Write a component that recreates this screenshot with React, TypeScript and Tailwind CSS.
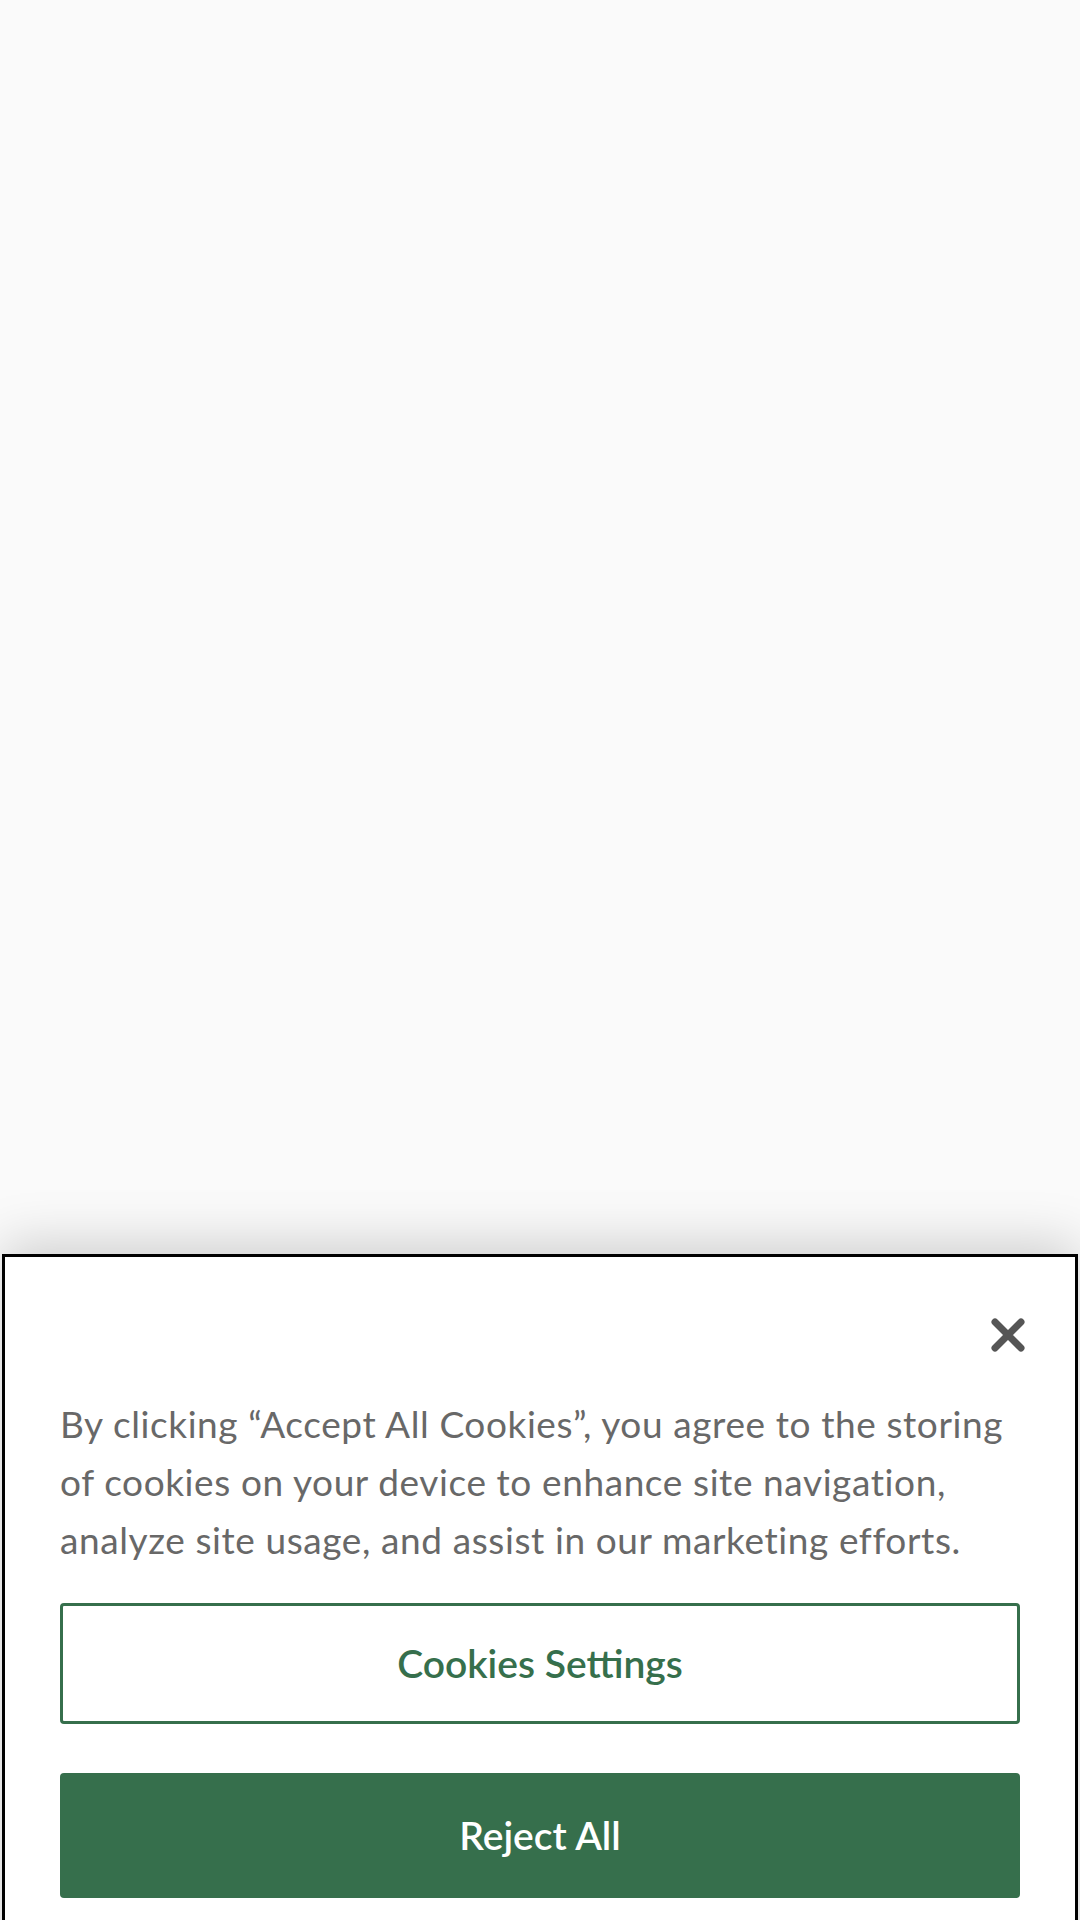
const CloseIcon = () => (
  <svg width="36" height="36" viewBox="0 0 36 36" fill="none">
    <path d="M5 5L31 31M31 5L5 31" stroke="#555555" strokeWidth="7" strokeLinecap="round" />
  </svg>
);

const App = () => {
  return (
    <div
      className="relative flex h-[1920px] w-[1080px] flex-col overflow-hidden bg-[#fafafa]"
      style={{ fontFamily: 'Lato, "Open Sans", sans-serif' }}
    >
      <div className="h-[1254px] shrink-0" />
      <div className="mx-[2px] flex shrink-0 flex-col border-[3px] border-black bg-white shadow-[0_-10px_50px_rgba(0,0,0,0.18)]">
        <div className="flex justify-end pr-[49px] pt-[60px]">
          <button className="flex h-[36px] w-[36px] items-center justify-center">
            <CloseIcon />
          </button>
        </div>
        <div className="px-[55px] pb-[60px] pt-[42px]">
          <p className="text-[37px] leading-[58px] tracking-[0.6px] text-[#686868]">
            By clicking “Accept All Cookies”, you agree to the storing of cookies on your device to enhance site
            navigation, analyze site usage, and assist in our marketing efforts.
          </p>
          <button className="mt-[34px] flex h-[121px] w-full items-center justify-center rounded-[4px] border-[3px] border-[#366f4c] bg-white text-[39px] font-semibold text-[#366f4c]">
            Cookies Settings
          </button>
          <button className="mt-[49px] flex h-[125px] w-full items-center justify-center rounded-[4px] bg-[#366f4c] text-[39px] font-semibold text-white">
            Reject All
          </button>
        </div>
      </div>
    </div>
  );
};

export default App;
